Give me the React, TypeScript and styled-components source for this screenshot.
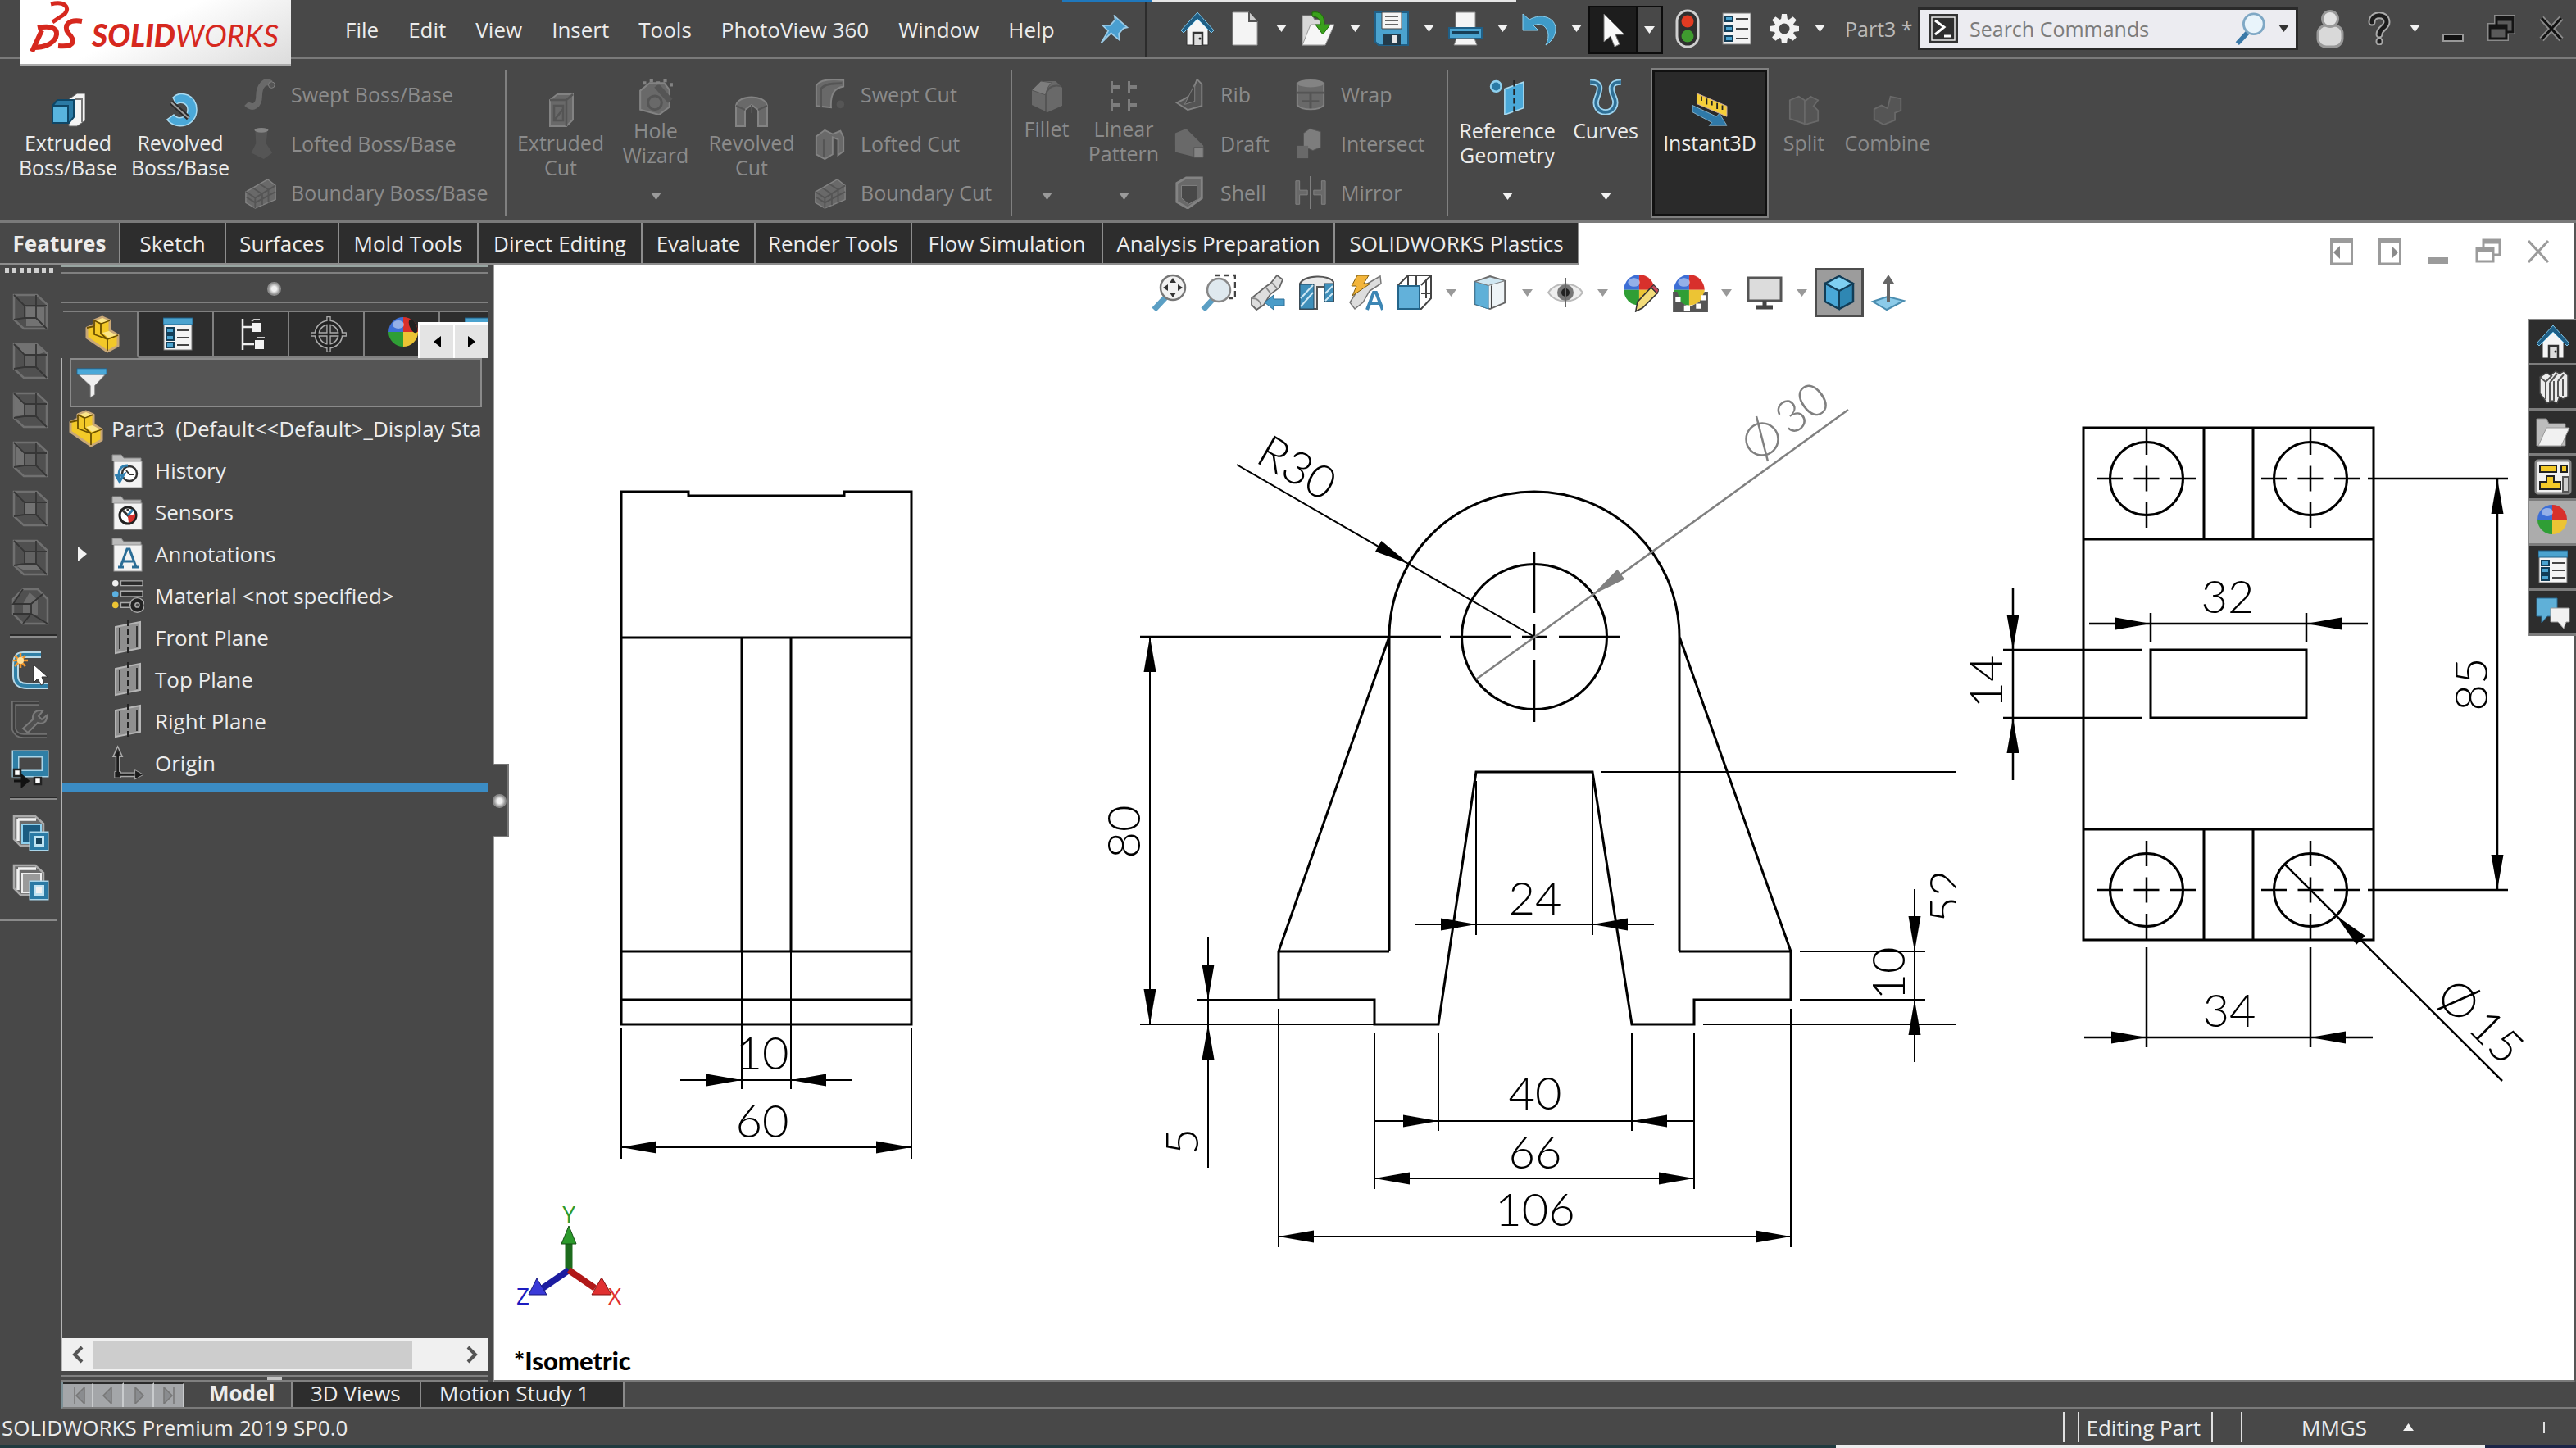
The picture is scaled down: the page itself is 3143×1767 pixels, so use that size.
import React from "react";
import styled, { createGlobalStyle } from "styled-components";

const bg = "#484848";
const dark = "#2d2d2d";
const rule = "#808080";
const blue = "#4ba3cf";
const deep = "#1f5f86";

const Global = createGlobalStyle`
  *, *::before, *::after { box-sizing: border-box; }
  body { margin: 0; background: ${bg}; }
  button, input { font: inherit; color: inherit; border: 0; margin: 0; padding: 0; background: none; outline: 0; }
  ul { margin: 0; padding: 0; list-style: none; }
  svg { display: block; flex: none; }
`;

const Page = styled.div`
  min-height: 100vh;
  display: flex;
  flex-direction: column;
  background: ${bg};
  color: #ececec;
  font-family: "Open Sans", "Noto Sans", sans-serif;
  font-size: 26px;
  line-height: 30px;
  overflow: hidden;
`;

/* ---------- title bar ---------- */
const TitleBar = styled.header`
  position: relative;
  display: flex;
  align-items: stretch;
  height: 72px;
  border-bottom: 3px solid #7a7a7a;
  flex: none;
`;
const Brand = styled.div`
  position: absolute;
  z-index: 2;
  left: 24px;
  top: 0;
  width: 331px;
  height: 80px;
  background: linear-gradient(155deg, #fff 45%, #dcdcdc);
  border-bottom: 2px solid #aaa;
`;
const TopStrip = styled.div`
  position: absolute;
  top: 0;
  left: 1296px;
  width: 554px;
  height: 3px;
  background: linear-gradient(90deg, #1f78bd 109px, #e6e6e6 109px);
`;
const MenuArea = styled.div`
  display: flex;
  align-items: center;
  width: 1400px;
  padding: 2px 20px 0 421px;
  border-right: 3px solid #2c2c2c;
`;
const Menus = styled.nav`
  display: flex;
  gap: 36px;
  flex: 1;
  white-space: nowrap;
`;
const MenuButton = styled.button``;
const QuickTools = styled.div`
  display: flex;
  align-items: center;
  padding-left: 32px;
`;
const Slot = styled.button<{ $w?: number }>`
  width: ${(p) => p.$w ?? 60}px;
  display: flex;
  align-items: center;
  justify-content: center;
  align-self: stretch;
  flex: none;
`;
const SelectSlot = styled(Slot)`
  margin: 7px 0 3px;
  background: #1d1d1d;
  border: 2px solid #0c0c0c;
`;
const SelectMore = styled(SelectSlot)`
  background: ${bg};
  border-left: 0;
`;
const DocName = styled.span`
  padding-left: 16px;
  color: #b9b9b9;
  font-size: 25px;
  white-space: nowrap;
`;
const TitleRight = styled.div`
  display: flex;
  align-items: center;
  margin-left: auto;
  padding-right: 3px;
`;
const SearchBox = styled.label`
  width: 464px;
  height: 52px;
  display: flex;
  align-items: center;
  background: #ececf1;
  border: 3px solid #2a2a2a;
  padding: 0 8px 0 10px;
  gap: 14px;
  font-size: 25px;
  input { flex: 1; min-width: 0; color: #333; }
  input::placeholder { color: #7c7c7c; opacity: 1; }
`;

/* ---------- ribbon ---------- */
const Ribbon = styled.section`
  display: flex;
  height: 200px;
  padding: 13px 0 5px 15px;
  border-bottom: 3px solid #7a7a7a;
  font-size: 25px;
  flex: none;
`;
const Big = styled.button<{ $w: number; $off?: boolean; $menu?: boolean; $on?: boolean }>`
  width: ${(p) => p.$w}px;
  display: flex;
  flex-direction: column;
  align-items: center;
  gap: 4px;
  padding: ${(p) => (p.$menu ? "11px 0 20px" : "28px 0 20px")};
  color: ${(p) => (p.$off ? "#8b8b8b" : "#ececec")};
  white-space: pre-line;
  ${(p) => p.$on && "background:#2a2a2a;box-shadow:inset 0 0 0 3px #111, 0 0 0 2px #808080;margin:0 3px 0 9px;"}
  flex: none;
  > :nth-child(3) { margin-top: auto; }
`;
const List = styled.div<{ $w: number }>`
  width: ${(p) => p.$w}px;
  display: grid;
  grid-template-rows: repeat(3, 60px);
  margin-left: 9px;
  flex: none;
`;
const Small = styled.button`
  display: flex;
  align-items: center;
  gap: 17px;
  color: #8b8b8b;
  white-space: nowrap;
`;
const VRule = styled.div`
  width: 2px;
  background: ${rule};
  flex: none;
`;

/* ---------- command tabs ---------- */
const TabRow = styled.div`
  display: flex;
  height: 51px;
  background: linear-gradient(90deg, ${bg} 600px, #fff 600px);
  border-right: 3px solid #555;
  flex: none;
`;
const Tab = styled.button<{ $w: number; $on?: boolean }>`
  width: ${(p) => p.$w}px;
  background: ${(p) => (p.$on ? bg : dark)};
  font-weight: ${(p) => (p.$on ? 700 : 400)};
  border-right: 2px solid #8d8d8d;
  border-bottom: 2px solid #8d8d8d;
  white-space: nowrap;
`;
const DocControls = styled.div`
  display: flex;
  gap: 29px;
  margin-left: auto;
  padding: 18px 28px 0 0;
  align-self: flex-start;
`;

/* ---------- main area ---------- */
const Main = styled.main`
  flex: 1;
  display: grid;
  grid-template-columns: 74px 529px minmax(0, 1fr);
  grid-template-rows: minmax(0, 1fr) 33px;
`;
const SideBar = styled.aside`
  grid-row: 1 / 3;
  padding: 4px 5px 0 0;
`;
const Grip = styled.div`
  height: 6px;
  margin: 0 0 17px 6px;
  background: repeating-linear-gradient(90deg, #d0d0d0 0 5px, transparent 5px 9px);
`;
const SideButton = styled.button`
  width: 100%;
  height: 60px;
  padding-left: 5px;
  display: flex;
  justify-content: center;
  align-items: center;
`;
const SideRule = styled.hr`
  margin: 4px 0 10px 12px;
  border: 0;
  height: 4px;
  border-top: 2px solid #2a2a2a;
  border-bottom: 2px solid #8a8a8a;
`;
const SideEnd = styled.hr`
  margin: 16px 0 0;
  border: 0;
  border-top: 2px solid #8a8a8a;
`;

const Panel = styled.section`
  display: flex;
  flex-direction: column;
  padding-right: 6px;
  border-right: 2px solid #9a9a9a;
  min-width: 0;
`;
const PanelHead = styled.div`
  height: 56px;
  display: flex;
  align-items: center;
  justify-content: center;
  border-top: 3px solid #98a5a1;
  flex: none;
  background: linear-gradient(${rule}, ${rule}) 0 6px / 100% 2px no-repeat, linear-gradient(${rule}, ${rule}) 0 42px / 100% 2px no-repeat;
`;
const Knob = styled.span`
  width: 17px;
  height: 17px;
  border-radius: 50%;
  background: radial-gradient(#f0f0f0 25%, #8c8c8c 60%);
`;
const PanelTabs = styled.div`
  display: flex;
  height: 58px;
  margin-left: 3px;
  border-top: 2px solid ${rule};
  overflow: hidden;
  position: relative;
  flex: none;
`;
const PanelTab = styled.button<{ $on?: boolean }>`
  width: 92px;
  padding-left: 6px;
  flex: none;
  display: flex;
  align-items: center;
  justify-content: center;
  background: ${(p) => (p.$on ? bg : dark)};
  border-right: 2px solid ${rule};
  border-bottom: 2px solid ${(p) => (p.$on ? bg : rule)};
`;
const TabPager = styled.div`
  position: absolute;
  right: 0;
  bottom: 0;
  display: flex;
  gap: 2px;
  padding: 3px 0 0 3px;
  background: #fff;
`;
const PagerButton = styled.button`
  width: 40px;
  height: 41px;
  background: #e4e4e4;
  display: flex;
  align-items: center;
  justify-content: center;
`;
const PanelBody = styled.div`
  flex: 1;
  display: flex;
  flex-direction: column;
  border-left: 2px solid #b4b4b4;
  min-width: 0;
`;
const Filter = styled.label`
  display: flex;
  align-items: center;
  height: 60px;
  margin: 0 7px 0 9px;
  padding-left: 6px;
  gap: 8px;
  border: 2px solid #8a8a8a;
  background: #555;
  input { flex: 1; min-width: 0; }
`;
const Tree = styled.ul``;
const Node = styled.li<{ $root?: boolean }>`
  display: flex;
  align-items: center;
  gap: ${(p) => (p.$root ? 9 : 13)}px;
  height: 51px;
  padding-left: ${(p) => (p.$root ? 7 : 19)}px;
  white-space: pre;
`;
const Twisty = styled.button`
  width: 30px;
  flex: none;
  margin-right: -2px;
`;
const Rollback = styled.div`
  height: 10px;
  background: #3b8cc4;
`;
const HScroll = styled.div`
  margin-top: auto;
  height: 40px;
  display: grid;
  grid-template-columns: 38px 1fr 38px;
  background: #f0f0f0;
`;
const ScrollTrack = styled.div`
  padding: 3px 54px 3px 0;
  &::before { content: ""; display: block; height: 100%; background: #cdcdcd; }
`;
const ScrollEnd = styled.button`
  display: flex;
  align-items: center;
  justify-content: center;
`;
const PanelFoot = styled.div`
  height: 14px;
  display: flex;
  justify-content: center;
  align-items: flex-end;
  border-bottom: 3px solid ${rule};
  background: linear-gradient(${rule}, ${rule}) 0 5px / 100% 2px no-repeat;
  flex: none;
  &::before { content: ""; width: 18px; height: 4px; background: #c4c4c4; }
`;

const Canvas = styled.section`
  position: relative;
  background: #fff;
  border-right: 3px solid #555;
  border-bottom: 3px solid #7a7a7a;
  min-width: 0;
  display: grid;
`;
const Sheet = styled.svg`
  width: 100%;
  height: 100%;
`;
const Hud = styled.div`
  position: absolute;
  top: 4px;
  left: 0;
  right: 14px;
  height: 60px;
  display: flex;
  justify-content: center;
`;
const HudOn = styled(Slot)`
  background: #9c9c9c;
  border: 3px solid #4d4d4d;
`;
const PanelHandle = styled.button`
  position: absolute;
  left: -2px;
  top: 609px;
  width: 20px;
  height: 90px;
  background: ${bg};
  border: 2px solid #777;
  border-left: 0;
  display: flex;
  align-items: center;
`;
const TaskPane = styled.div`
  position: absolute;
  right: -3px;
  top: 66px;
  width: 59px;
  display: grid;
  border-left: 2px solid #8a8a8a;
  border-top: 2px solid #8a8a8a;
`;
const TaskButton = styled.button<{ $on?: boolean }>`
  height: 55px;
  background: ${(p) => (p.$on ? "#acacac" : dark)};
  border-bottom: 3px solid #7c7c7c;
  display: flex;
  align-items: center;
  justify-content: center;
`;

/* ---------- bottom ---------- */
const BottomTabs = styled.div`
  grid-column: 2 / 4;
  display: flex;
  align-items: stretch;
  border-left: 3px solid #7c9096;
  border-bottom: 3px solid #7a7a7a;
`;
const Step = styled.button`
  width: 37px;
  background: #a4a6a9;
  border-right: 2px solid #c9cbcd;
  border-top: 2px solid #2a2a2a;
  display: flex;
  align-items: center;
  justify-content: center;
`;
const BottomTab = styled.button<{ $w: number; $on?: boolean }>`
  width: ${(p) => p.$w}px;
  background: ${(p) => (p.$on ? bg : dark)};
  font-weight: ${(p) => (p.$on ? 700 : 400)};
  border-right: 2px solid #8a8a8a;
  line-height: 24px;
  padding: 0 0 4px ${(p) => (p.$on ? 30 : 22)}px;
  text-align: left;
  white-space: nowrap;
`;
const Status = styled.footer`
  display: flex;
  align-items: center;
  height: 43px;
  padding-left: 2px;
  flex: none;
  white-space: nowrap;
`;
const StatusRight = styled.div`
  display: flex;
  align-items: center;
  margin-left: auto;
  padding-right: 38px;
`;
const Bar = styled.span<{ $l?: number; $r?: number; $h?: number }>`
  width: 2px;
  height: ${(p) => p.$h ?? 37}px;
  background: #e0e0e0;
  margin-left: ${(p) => p.$l ?? 0}px;
  margin-right: ${(p) => p.$r ?? 0}px;
`;
const Units = styled.button`
  display: flex;
  align-items: center;
  gap: 44px;
  padding: 0 158px 0 72px;
`;
const TaskStrip = styled.div`
  height: 4px;
  flex: none;
  background: linear-gradient(90deg, transparent calc(100% - 111px), #1c2547 calc(100% - 111px)),
    linear-gradient(90deg, #213a3f 2240px, #ececec 2240px);
`;

/* ---------- icons ---------- */
type P = { children: React.ReactNode; w?: number; h?: number; vb?: string };
const I = ({ children, w = 42, h = 42, vb = "0 0 42 42" }: P) => (
  <svg width={w} height={h} viewBox={vb} aria-hidden="true">{children}</svg>
);
const Down = ({ c = "#f2f2f2", up }: { c?: string; up?: boolean }) => (
  <I w={13} h={9} vb="0 0 13 9"><path d={up ? "M0 9h13L6.5 0z" : "M0 0h13L6.5 9z"} fill={c} /></I>
);
const HomeIcon = () => (
  <I>
    <path d="M8 21v20h26V21L21 8z" fill="#f5f5f5" stroke="#333" />
    <path d="M1 23 21 1l20 22-3 3L21 9 4 26z" fill={deep} stroke="#7fc4e6" />
    <path d="M16 41V26h11v15" fill="#ddd" stroke="#333" strokeWidth="2.5" />
    <circle cx="24" cy="33" r="1.5" fill="#222" />
  </I>
);
const NewIcon = () => (
  <I><path d="M6 1h20l10 11v29H6z" fill="#f4f4f4" stroke="#999" /><path d="M26 1v11h10" fill="#ccc" stroke="#555" strokeWidth="2" /></I>
);
const OpenIcon = () => (
  <I>
    <path d="M2 41V5h12l3 5h10v31z" fill="#d7d7d7" stroke="#888" /><path d="M2 41 12 16h29L30 41z" fill="#f6f6f6" stroke="#999" />
    <path d="M14 1c10-2 15 4 15 15h7L27 28l-9-12h6c0-7-4-10-10-10z" fill="#3aa01c" stroke="#1d6a08" />
  </I>
);
const SaveIcon = () => (
  <I>
    <path d="M1 1h40v40H5l-4-4z" fill={blue} stroke={deep} strokeWidth="2" /><path d="M9 1h24v20H9z" fill="#f5f5f5" stroke="#444" />
    <path d="M13 6h16M13 11h16M13 16h16" stroke="#666" strokeWidth="2" /><path d="M11 27h21v14H11z" fill="#233b4a" /><path d="M22 29h6v10h-6z" fill="#e8e8e8" />
  </I>
);
const PrintIcon = () => (
  <I>
    <path d="M9 1h24v20H9z" fill="#f5f5f5" stroke="#888" /><path d="M1 20h40v13H1z" fill={blue} stroke={deep} strokeWidth="2" />
    <path d="M5 24h32v4H5z" fill="#173f58" /><path d="M10 33h22l3 8H7z" fill="#f5f5f5" stroke="#888" />
  </I>
);
const UndoIcon = () => (
  <I><path d="M1 3v20h19l-6-6c10-5 18 3 18 12 0 5-1 8-3 12 8-5 12-12 12-20C41 8 24 1 9 10z" fill="#3f9bc8" stroke="#8ed0ee" /></I>
);
const CursorIcon = () => (
  <I><path d="M10 1v34l8-7 5 13 6-3-5-12h11z" fill="#fafafa" stroke="#777" /></I>
);
const TrafficIcon = () => (
  <I w={30} h={48} vb="0 0 30 48">
    <rect x="2" y="2" width="26" height="44" rx="13" fill="#2f2f2f" stroke="#cfcfcf" strokeWidth="3" />
    <circle cx="15" cy="15" r="7.5" fill="#e23b22" /><circle cx="15" cy="33" r="7.5" fill="#3f9b2f" />
  </I>
);
const ListIcon = ({ head }: { head?: boolean }) => (
  <I w={36} h={head ? 42 : 40} vb="0 0 36 40">
    <rect x="1" y="1" width="34" height="38" fill="#f3f3f3" stroke="#777" />
    {head && <rect x="0" y="0" width="36" height="8" fill={blue} stroke={deep} />}
    {(head ? [15, 24, 33] : [8, 20, 32]).map((y) => (
      <g key={y}><rect x="4" y={y - 3} width="9" height="6" fill={blue} stroke="#123d57" strokeWidth="2" /><path d={`M17 ${y}h15`} stroke="#444" strokeWidth="2" /></g>
    ))}
  </I>
);
const GearIcon = () => (
  <I>
    <g fill="#f2f2f2" transform="translate(21 21)">
      {[0, 45, 90, 135, 180, 225, 270, 315].map((a) => <path key={a} d="M-4-11-3-18H3L4-11z" transform={`rotate(${a})`} />)}
    </g>
    <circle cx="21" cy="21" r="9.5" fill="none" stroke="#f2f2f2" strokeWidth="6" />
  </I>
);
const PinIcon = () => (
  <I w={36} h={36}><path d="M22 2 40 18l-5 1-7 8 1 9-5-4-7-6L3 40l10-17-8-8 11 0 7-8z" fill="#4a9fd0" stroke="#9ccbe6" strokeWidth="2" /></I>
);
const PromptIcon = () => (
  <I w={36} h={36} vb="0 0 36 36"><rect x="1.5" y="1.5" width="33" height="33" fill="#2f2f2f" stroke="#333" strokeWidth="3" /><rect x="4" y="4" width="28" height="28" fill="none" stroke="#eee" strokeWidth="1.5" /><path d="M8 8l11 8-11 9M19 27h9" fill="none" stroke="#fff" strokeWidth="3" /></I>
);
const Lens = () => (
  <I w={40} h={42}><path d="M17 26 4 40" stroke="#3b79a8" strokeWidth="6" /><circle cx="25" cy="15" r="13" fill="#e9f4fb" stroke="#7fa8c5" strokeWidth="3" /></I>
);
const UserIcon = () => (
  <I w={34} h={48} vb="0 0 34 48"><rect x="2" y="20" width="30" height="26" rx="10" fill="#d9d9d9" stroke="#999" strokeWidth="3" /><circle cx="17" cy="12" r="9.5" fill="#e2e2e2" stroke="#999" strokeWidth="3" /></I>
);
const HelpIcon = () => (
  <I w={28} h={40} vb="0 0 28 40"><g fill="none" strokeLinecap="round"><path d="M5 12c0-11 18-11 18 0 0 7-9 7-9 15M14 35v1" stroke="#aaa" strokeWidth="9" /><path d="M5 12c0-11 18-11 18 0 0 7-9 7-9 15M14 35v1" stroke="#1c1c1c" strokeWidth="5" /></g></I>
);
const MinIcon = ({ c, o }: { c: string; o?: string }) => <I w={28} h={34} vb="0 0 28 34"><rect x="2" y="24" width="24" height="8" fill={c} stroke={o} strokeWidth="2" /></I>;
const RestoreIcon = ({ c, f, o }: { c: string; f: string; o?: string }) => (
  <I w={34} h={34} vb="0 0 34 34">
    {o && <path d="M11 3h20v18H11zM3 13h20v16H3z" fill="none" stroke={o} strokeWidth="6" />}
    <path d="M11 3h20v18H11z" fill={f} stroke={c} strokeWidth="3" /><path d="M11 5h20" stroke={c} strokeWidth="5" /><path d="M3 13h20v16H3z" fill={f} stroke={c} strokeWidth="3" /><path d="M3 15h20" stroke={c} strokeWidth="5" />
  </I>
);
const XIcon = ({ c, o }: { c: string; o?: string }) => (
  <I w={30} h={34} vb="0 0 30 34"><path d="M3 4l24 26M27 4 3 30" stroke={o} strokeWidth="7" /><path d="M3 4l24 26M27 4 3 30" stroke={c} strokeWidth="3" /></I>
);
const PaneIcon = ({ right }: { right?: boolean }) => (
  <I w={28} h={34} vb="0 0 28 34"><rect x="1.5" y="2" width="25" height="30" fill="none" stroke="#9b9b9b" strokeWidth="3" /><path d="M1 4h26" stroke="#9b9b9b" strokeWidth="4" /><path d={right ? "M16 10v16l8-8z" : "M12 10v16l-8-8z"} fill="#8a8a8a" /></I>
);

const grey = { f: "#7d7d7d", m: "#696969", d: "#555", s: "#838383" };
const Ex = () => (
  <I><path d="M22 8 32 1h10v33l-10 7H22z" fill="#f4f4f4" stroke="#666" /><path d="M30 8h8v28" fill="none" stroke="#777" strokeWidth="2" /><path d="M2 16 8 9h20v21l-6 7H2z" fill="#2a7aa5" stroke="#0e4666" strokeWidth="2" /><path d="M2 16h19v21H2z" fill="#58b4de" stroke="#0e4666" strokeWidth="2" /></I>
);
const Rev = () => (
  <I><path d="M12 6C22-4 41 3 41 21c0 19-24 27-36 12l8-6c6 7 17 3 17-6 0-8-8-11-14-7z" fill="#4aa8d8" stroke="#a9daf0" strokeWidth="1.5" /><path d="M10 12 31 31" stroke="#2b2b2b" strokeWidth="6" /><path d="M10 12 31 31" stroke="#9b9b9b" strokeWidth="2" /></I>
);
const Sweep = () => <I w={40} h={40}><path d="M3 33c8 8 16 2 16-10S26 2 34 7" fill="none" stroke={grey.m} strokeWidth="8" /><circle cx="35" cy="9" r="4" fill={grey.d} stroke={grey.s} /></I>;
const Loft = () => <I w={40} h={40}><path d="M14 3h16l-2 18 8 12-11 8L9 33l6-12z" fill={grey.d} /><ellipse cx="22" cy="4" rx="9" ry="3" fill={grey.s} /></I>;
const Bound = () => <I w={40} h={40}><path d="M2 20 30 4l10 8v18L14 41 2 34z" fill={grey.m} stroke={grey.s} strokeWidth="1.5" /><path d="M2 20l12 8 26-16M14 28v13M11 15l12 8v14M20 10l11 7v17M3 27l11 7 26-14" fill="none" stroke={grey.d} strokeWidth="2" /></I>;
const CutBox = () => <I><path d="M8 9 17 2h19v31l-8 8H8z" fill={grey.m} stroke={grey.s} strokeWidth="2" /><path d="M8 9h20v32M28 9l8-7M13 16h11v18H13zM13 34 24 20" fill="none" stroke={grey.d} strokeWidth="2.5" /></I>;
const Hole = () => <I w={44} h={44}><path d="M3 14 14 5h17l6 8v20l-12 9-22-6z" fill={grey.m} stroke={grey.s} strokeWidth="2" /><circle cx="20" cy="28" r="8" fill="none" stroke={grey.d} strokeWidth="3" /><path d="M22 8l16 18" stroke={grey.d} strokeWidth="7" /><path d="M6 5h4m4-3h4m4 3h4m4-3h4m4 5h3" stroke={grey.s} strokeWidth="4" /></I>;
const Arch = () => <I><path d="M2 41V16C4 2 38 2 40 16v25H29V21l-8-6-8 6v20z" fill={grey.m} stroke={grey.s} strokeWidth="2" /><path d="M2 16l11 5M40 16l-11 5M21 15v10" stroke={grey.d} strokeWidth="2" /></I>;
const SwCut = () => <I w={40} h={40}><path d="M3 36V10C8 2 20 1 38 3v8c-12 2-17 10-16 27z" fill={grey.m} stroke={grey.s} strokeWidth="2" /><path d="M9 38V14C14 8 22 7 36 7" fill="none" stroke={grey.d} strokeWidth="3" /><circle cx="34" cy="34" r="5" fill={grey.d} /></I>;
const LoCut = () => <I w={40} h={40}><path d="M3 12 14 4l10 5 10-4 4 8v18l-7 5V16l-7-3v22l-10 6-11-6z" fill={grey.m} stroke={grey.s} strokeWidth="2" /><path d="M13 16v22" stroke={grey.d} strokeWidth="3" /></I>;
const Fil = () => <I><path d="M3 14 14 3h18l8 8v22L22 41 3 32z" fill={grey.m} /><path d="M3 14l11-11 14 2c-4 2-7 7-8 15z" fill={grey.f} stroke={grey.d} /><path d="M20 20v20M20 20c2-9 8-13 18-11" fill="none" stroke={grey.d} strokeWidth="2" /></I>;
const Lin = () => <I><g fill={grey.f}><path d="M5 3h3v5h8v5H8v5H5zM26 3h3v5h8v5h-8v5h-3zM5 25h3v5h8v5H8v5H5zM26 25h3v5h8v5h-8v5h-3z" /></g></I>;
const RibI = () => <I w={40} h={40}><path d="M30 2 36 8v28l-18 5L4 32l8-4 10-6z" fill={grey.d} stroke={grey.s} strokeWidth="2" /><path d="M27 8v22l-13 4z" fill={bg} stroke={grey.s} /></I>;
const DraftI = () => <I w={40} h={40}><path d="M2 8 16 2l22 22v14H26L2 32z" fill={grey.m} /><path d="M26 26h12v13H26z" fill={grey.s} stroke={grey.d} /></I>;
const ShellI = () => <I w={40} h={40}><path d="M4 9 16 2h20v26L18 41 4 33z" fill={grey.m} stroke={grey.s} strokeWidth="3" /><path d="M10 12h20v18l-11 6-9-8z" fill={bg} stroke={grey.s} /></I>;
const WrapI = () => <I w={40} h={40}><path d="M4 7v28c6 7 28 7 34 0V7z" fill={grey.m} stroke={grey.s} strokeWidth="2" /><ellipse cx="21" cy="7" rx="17" ry="5" fill={grey.s} /><path d="M4 19h34M21 19v20M10 30h22" stroke={grey.d} strokeWidth="3" /></I>;
const InterI = () => <I w={40} h={40}><path d="M12 8 20 2l14 4v20l-10 4-12-5z" fill={grey.f} stroke={grey.d} /><path d="M4 24h14v16H4z" fill={grey.m} /></I>;
const MirI = () => <I w={40} h={40}><path d="M21 0v42" stroke={grey.s} strokeWidth="2" /><path d="M2 6h5v12h10v6H7v12H2zM40 6h-5v12H25v6h10v12h5z" fill={grey.m} stroke={grey.s} /></I>;
const RefI = () => <I w={46} h={44}><path d="M18 12 40 4v30l-22 8z" fill="#4aa8d8" stroke="#a9daf0" strokeWidth="1.5" /><path d="M29 2v40" stroke="#222" strokeWidth="2" strokeDasharray="7 3" /><circle cx="8" cy="9" r="6" fill="#2a7aa5" stroke="#8ed0ee" strokeWidth="2.5" /></I>;
const CurveI = () => <I w={46} h={44}><g fill="none"><path d="M3 4c14 0 12 8 8 18s2 17 10 17 14-8 10-17-6-18 8-18" stroke="#9dd3ee" strokeWidth="7" /><path d="M3 4c14 0 12 8 8 18s2 17 10 17 14-8 10-17-6-18 8-18" stroke="#2f6f95" strokeWidth="3.5" /></g></I>;
const InstI = () => <I w={48} h={42} vb="0 0 50 46"><path d="M8 1 48 18v14L8 15z" fill="#f6cf3a" stroke="#caa" /><path d="M14 5v6M21 8v8M28 11v6M35 14v8M42 17v6" stroke="#222" strokeWidth="2" /><path d="M2 17 34 32l4-4 10 16H24l4-4L2 26z" fill="#2f79a8" stroke="#8ab6cf" /></I>;
const SplitI = () => <I w={38} h={42}><path d="M2 8 14 3l8 5v32L2 33zM22 10l8-7 10 5-6 8 6 6v14l-18 5z" fill={grey.d} stroke={grey.m} strokeWidth="2" /></I>;
const CombI = () => <I w={38} h={42}><path d="M3 20l10-5 8 4 4-16 14 3v16l-8 3v10L16 41 3 34z" fill={grey.d} stroke={grey.m} strokeWidth="2" /></I>;

const PartIcon = () => (
  <I w={44} h={46} vb="0 0 44 46">
    <path d="M12 6 22 2l9 4v12l10 6v13L28 44 3 27V15l9-4z" fill="#f3c928" stroke="#c9a877" strokeWidth="3" strokeLinejoin="round" />
    <path d="M12 6l8 4 11-4M20 10v12L28 29l13-5M28 29v14M3 15l9-2v10l16 6M12 13V6" fill="none" stroke="#6b5000" strokeWidth="1.8" />
    <path d="M14 6l8-3 7 3-8 3zM22 21l8-2 9 5-10 3z" fill="#fbe68a" />
  </I>
);
const BranchIcon = () => <I><path d="M8 2v38M8 12h12M8 33h14" stroke="#eee" strokeWidth="2.5" fill="none" /><path d="M20 7h10v11H20zM23 28h11v11H23z" fill="#f3f3f3" /><path d="M19 5l3-2h7M26 25h9" stroke="#ccc" strokeWidth="2" /></I>;
const TargetIcon = () => <I w={46} h={46}><g fill="none"><circle cx="21" cy="21" r="13" stroke="#aaa" strokeWidth="6" /><path d="M21 1v40M1 21h40" stroke="#aaa" strokeWidth="5" /><circle cx="21" cy="21" r="13" stroke="#222" strokeWidth="3" /><path d="M21 2v38M2 21h38" stroke="#222" strokeWidth="2.5" /></g></I>;
const Ball = ({ extra, w = 42, h = 46 }: { extra?: React.ReactNode; w?: number; h?: number }) => (
  <I w={w} h={h} vb="0 0 42 46">
    <path d="M20 20V2A18 18 0 0 0 2 20z" fill="#3d6fd6" /><path d="M20 20V2a18 18 0 0 1 18 18z" fill="#d8302c" />
    <path d="M20 20v18A18 18 0 0 1 2 20z" fill="#2f9e35" /><path d="M20 20v18a18 18 0 0 0 18-18z" fill="#ecc434" />
    <ellipse cx="14" cy="11" rx="7" ry="5" fill="#fff" opacity=".45" />{extra}
  </I>
);
const Funnel = () => <I w={38} h={42}><path d="M2 9h38L25 25v12l-6 4V25z" fill="#eee" stroke="#888" /><path d="M1 2h40v8H1z" fill="#4aa8d8" stroke={deep} /></I>;
const Folder = ({ children }: { children: React.ReactNode }) => (
  <I w={40} h={44} vb="0 0 40 44"><path d="M1 11V3h11l3 4h21v4" fill="#bbb" stroke="#888" /><rect x="3" y="11" width="34" height="32" fill="#f3f3f3" stroke="#999" /><g transform="translate(0 4)">{children}</g></I>
);
const PlaneIcon = () => <I w={40} h={46} vb="0 0 40 44"><path d="M5 9 35 3v32L5 41z" fill="#8f8f8f" stroke="#b5b5b5" strokeWidth="2" /><path d="M10 10v26M31 8v26" stroke="#333" strokeWidth="2" /><path d="M20 1v42" stroke="#222" strokeWidth="2" strokeDasharray="7 4" /></I>;
const MatIcon = () => (
  <I w={40} h={46} vb="0 0 42 44"><path d="M12 3h28v6H12zM12 16h28v7H12zM12 31h18v6H12z" fill="#2b2b2b" stroke="#aaa" strokeWidth="1.5" /><circle cx="5" cy="6" r="4" fill="#eee" /><circle cx="5" cy="20" r="4" fill="#5bb0e0" /><circle cx="5" cy="34" r="4" fill="#ecc434" /><circle cx="33" cy="34" r="6" fill="none" stroke="#aaa" strokeWidth="8" /><circle cx="33" cy="34" r="6" fill="none" stroke="#222" strokeWidth="5" /></I>
);
const OriginIcon = () => <I w={40} h={46} vb="0 0 42 44"><path d="M8 5v32h28" fill="none" stroke="#aaa" strokeWidth="6" /><path d="M2 14 8 1l6 13z" fill="#333" stroke="#aaa" strokeWidth="1.5" /><path d="M30 31l11 6-11 6zM4 33h8v8H4z" fill="#1c1c1c" stroke="#aaa" /><path d="M8 8v28M10 37h20" stroke="#1c1c1c" strokeWidth="3" /></I>;

const faces = [
  "M18 18h22v23H18z", "M6 3h24l10 10-9 3H16z", "M4 4l12 12v14L4 31z", "M6 4l10 12v14L6 33z", "M16 16h14v16H16z", "M6 34l10-4h14l9 9H16z",
];
const ViewCube = ({ n }: { n: number }) => (
  <I w={46} h={46} vb="0 0 46 46">
    <path d="M3 3h28l12 11v30H15L3 33z" fill="#505050" stroke="#707070" strokeWidth="2.5" />
    <path d="M17 17h12v13H17z" fill="#626262" />
    <path d={faces[n]} fill="#727272" /><path d="M3 3l13 13v15L3 33M16 16h14v15H16M30 16l0-13M30 16h13M30 31l13 13" fill="none" stroke="#363636" strokeWidth="1.8" />
  </I>
);
const IsoCube = () => <I w={46} h={46} vb="0 0 46 46"><path d="M14 2h18l12 12v30H14L2 32V14z" fill="#505050" stroke="#707070" strokeWidth="2.5" /><path d="M22 6 32 15v19H14V20z" fill="#6c6c6c" /><path d="M14 2 2 20h22L38 8M24 20v12L14 44M24 32l20 12M2 32h22" fill="none" stroke="#333" strokeWidth="1.8" /></I>;
const SketchNew = () => (
  <I w={46} h={46} vb="0 0 46 46"><path d="M36 4H14C6 4 5 10 5 18v12c0 9 6 12 14 12h26" fill="none" stroke="#b9d8e6" strokeWidth="8" /><path d="M36 4H14C6 4 5 10 5 18v12c0 9 6 12 14 12h26" fill="none" stroke="#2f7fa6" strokeWidth="4" />
    <path d="M11 2v18M2 11h18M4 5l13 13M17 5 4 18" stroke="#f0962c" strokeWidth="2.5" /><circle cx="11" cy="11" r="4" fill="#ffe09a" /><path d="M27 16v22l5-5 4 8 4-2-3-8h7z" fill="#fff" stroke="#333" /></I>
);
const SketchFix = () => <I w={46} h={46} vb="0 0 46 46"><path d="M34 3H3v32c2 6 6 8 12 8h28" fill="none" stroke="#707070" strokeWidth="6" /><path d="M34 3H3v32c2 6 6 8 12 8h28" fill="none" stroke="#3e3e3e" strokeWidth="2.5" /><path d="M14 34l12-11c-1-8 5-13 12-10l-5 6 4 4 6-5c1 8-5 11-11 9L20 39z" fill="#505050" stroke="#7a7a7a" strokeWidth="2" /></I>;
const RectMove = () => <I w={46} h={46} vb="0 0 46 46"><rect x="5" y="5" width="36" height="24" fill="none" stroke="#a8d4e8" strokeWidth="9" /><rect x="5" y="5" width="36" height="24" fill="none" stroke="#2f7fa6" strokeWidth="6" /><path d="M3 24h8v8H3zM28 34h8v8h-8z" fill="#fff" stroke="#222" strokeWidth="2.5" /><path d="M3 38h14M13 32l7 6-7 6z" fill="#111" stroke="#111" strokeWidth="3" /></I>;
const Layers = ({ solid }: { solid?: boolean }) => (
  <I w={46} h={46} vb="0 0 46 46"><path d="M3 3h26l10 9v27H11L3 31z" fill="#6b6b6b" stroke="#aaa" strokeWidth="2.5" /><path d="M8 7h22M8 7v26" stroke="#f1f1f1" strokeWidth="3.5" fill="none" /><rect x="13" y="13" width="23" height="23" fill={solid ? "#1b5b80" : "#9a9a9a"} stroke={solid ? "#8ed0ee" : "#eee"} strokeWidth="2" />
    <rect x="24" y="24" width="19" height="19" fill="#bfe3f2" stroke="#a8d4e8" strokeWidth="5" /><rect x="25" y="25" width="17" height="17" fill="none" stroke="#2a7aa5" strokeWidth="4" /><rect x="30" y="30" width="7" height="7" fill={solid ? "#17435c" : "#f1f1f1"} /></I>
);

/* heads-up icons */
const ZFit = () => <I w={44} h={46} vb="0 0 44 46"><path d="M18 29 4 44" stroke="#5b9fc4" strokeWidth="7" /><circle cx="27" cy="17" r="15" fill="#f2f2f2" stroke="#777" strokeWidth="2.5" /><path d="M27 5l-4 6h8zM27 29l-4-6h8zM15 17l6-4v8zM39 17l-6-4v8z" fill="#333" /></I>;
const ZArea = () => <I w={44} h={46} vb="0 0 44 46"><path d="M18 2h25v28h-8" fill="none" stroke="#444" strokeWidth="2.5" strokeDasharray="7 4" /><path d="M16 31 4 44" stroke="#5b9fc4" strokeWidth="7" /><circle cx="23" cy="20" r="14" fill="#dfe9ef" stroke="#888" strokeWidth="2.5" /></I>;
const ZPrev = () => <I w={44} h={46} vb="0 0 44 46"><path d="M34 2 26 12 20 16 3 30v8l6 6 9-6 8-13 11-8 4-10z" fill="#dedede" stroke="#666" strokeWidth="1.8" /><path d="M20 16l7 9M28 11l7 8M4 30c6 0 10 4 11 10" fill="none" stroke="#888" strokeWidth="1.8" /><path d="M19 35l11-9v5h13v8H30v5z" fill="#4a9cc8" stroke="#2d6f97" /></I>;
const Section = () => <I w={44} h={46} vb="0 0 44 46"><path d="M2 12C8 1 38 1 43 10v24H32V16h-9v27H2z" fill="#e9e9e9" stroke="#555" strokeWidth="2" /><path d="M2 13h17v30H2zM32 12h11v22H32z" fill="#3f8fba" stroke="#24455a" /><path d="M3 30 18 14M3 40 18 23M33 24l9-9M33 33l9-9" stroke="#cfe8f5" strokeWidth="2" /></I>;
const Dyn = () => <I w={44} h={46} vb="0 0 44 46"><path d="M40 3 14 18 3 35l6 8 10-8 8-14 14-9z" fill="#ddd" stroke="#777" strokeWidth="1.5" /><path d="M12 2h14l-6 10h8L6 27l5-12H5z" fill="#f3b53b" stroke="#7b5a10" /><path d="M24 44l8-21h3l8 21M28 36h11" fill="none" stroke="#3c86b4" strokeWidth="4" /></I>;
const Orient = () => <I w={44} h={46} vb="0 0 44 46"><path d="M2 14 14 2h28v28L30 43H2z" fill="#fff" stroke="#444" strokeWidth="2" /><path d="M14 2v12M42 2 30 14M24 2v22M30 24h12M36 8v22" stroke="#444" strokeWidth="2" /><path d="M2 15h26v28H2z" fill="#62b1da" stroke="#24658a" strokeWidth="2" /></I>;
const Disp = () => <I w={42} h={46} vb="0 0 44 46"><path d="M3 9 22 2l19 6v28l-19 8-19-6z" fill="#eef4f7" stroke="#666" strokeWidth="2" /><path d="M3 9l17 5v30L3 38z" fill="#5fb0d8" stroke="#3a7fa5" /><path d="M20 14l21-6-19-5-19 6z" fill="#cfe6f1" stroke="#777" /><path d="M24 14v29" stroke="#444" strokeWidth="2" /></I>;
const Eye = () => <I w={44} h={40} vb="0 0 44 40"><path d="M1 20C10 6 34 6 43 20 34 34 10 34 1 20z" fill="#eee" stroke="#bbb" strokeWidth="2" /><circle cx="22" cy="20" r="10" fill="#777" /><circle cx="22" cy="20" r="5" fill="#222" /><path d="M22 2v36" stroke="#666" strokeWidth="2" /></I>;
const Pencil = <g><path d="M16 45 18 34 34 17l7 7-17 17z" fill="#f3dc7a" stroke="#333" strokeWidth="1.5" /><path d="M34 17l3-3 6 6-2 4z" fill="#c24a5a" stroke="#333" /></g>;
const Checker = <g><path d="M1 22h5l4 12 10 6 12-6 6-12h4v24H1z" fill="#555" /><path d="M4 28h6v6H4zM14 38h7v6h-7zM28 36h6v6h-6zM34 26h6v6h-6z" fill="#fff" /></g>;
const Monitor = () => <I w={44} h={42} vb="0 0 44 42"><rect x="2" y="3" width="40" height="28" fill="#dcdcdc" stroke="#555" strokeWidth="3" /><path d="M22 31v6M12 39h20" stroke="#444" strokeWidth="5" /></I>;
const BlueCube = () => <I w={42} h={44} vb="0 0 42 44"><path d="M21 2 38 11v22L21 42 4 33V11z" fill="#2f87b3" stroke="#123d57" strokeWidth="2.5" /><path d="M21 2 38 11 21 20 4 11z" fill="#7fd0f2" stroke="#123d57" strokeWidth="2" /><path d="M4 11l17 9v22L4 33z" fill="#4aa8d8" stroke="#123d57" strokeWidth="2" /></I>;
const NormalTo = () => <I w={44} h={46} vb="0 0 44 46"><path d="M3 34l18-6 20 5-21 11z" fill="#8ccbe9" stroke="#4a8db0" strokeWidth="2" /><path d="M22 34V8" stroke="#666" strokeWidth="4" /><path d="M15 12 22 1l7 11z" fill="#666" /></I>;

/* task pane icons */
const Books = () => (
  <I>
    <path d="M5 9 13 4l5 3 6-5 5 3 5-3 5 5v26l-6 3-4-3-3 8-6-3-6 3-9-12z" fill="#ececec" stroke="#444" strokeWidth="1.5" />
    <path d="M5 9l7 6 8-8M17 16l9-11M27 14l7-8M12 15v21M17 16v24M22 14v24M27 14v20M33 12v20" fill="none" stroke="#555" strokeWidth="2" />
  </I>
);
const FolderOpen = () => <I><path d="M1 38V5h12l3 6h20v27z" fill="#bdbdbd" stroke="#888" /><path d="M3 38 13 16h28L31 38z" fill="#f1f1f1" stroke="#999" /></I>;
const Palette = () => <I w={46} h={44} vb="0 0 46 44"><rect x="2" y="2" width="42" height="40" rx="3" fill="#f1f1f1" stroke="#8a8a8a" strokeWidth="3" /><path d="M7 8h20v8H7zM33 8h7v8h-7zM15 21h9v7h8v9H7v-9h8z" fill="#f3c928" stroke="#222" strokeWidth="2" /><path d="M35 22h7v18h-7z" fill="#ccc" stroke="#555" strokeWidth="2" /></I>;
const Chat = () => <I><path d="M1 4h25v22H14l-7 8v-8H1z" fill="#5fb0d8" stroke="#2d6f97" /><path d="M18 16h23v17h-4l-3 8-7-8h-9z" fill="#f1f1f1" stroke="#999" /></I>;

/* ---------- drawing ---------- */
const Arrow = ({ x, y, a, c = "#000" }: { x: number; y: number; a: number; c?: string }) => (
  <path d="M0 0-43-7.5V7.5z" fill={c} transform={`translate(${x} ${y}) rotate(${a})`} />
);
const Dim = ({ x, y, a = 0, c = "#000", anchor = "middle", children }: { x: number; y: number; a?: number; c?: string; anchor?: "middle" | "start"; children: string }) => (
  <text transform={`translate(${x} ${y}) rotate(${a})`} textAnchor={anchor} fill={c} fontFamily="Lato, sans-serif" fontWeight="300" fontSize="56">{children}</text>
);
const Hole15 = ({ x, y }: { x: number; y: number }) => (
  <g transform={`translate(${x} ${y})`}>
    <circle r="44.5" strokeWidth="3" />
    <path strokeWidth="2.5" d="M-60 0h31M-15.5 0h31M29 0h31M0-60v31M0-15.5v31M0 29v31" />
  </g>
);
const Drawing = () => (
  <Sheet role="img" aria-label="Bearing bracket drawing">
    <defs><clipPath id="mid"><rect x="1300" y="323" width="1086" height="1400" /></clipPath></defs>
    <g transform="translate(-603 -323)" fill="none" stroke="#000" strokeWidth="3">
      {/* side view */}
      <path d="M758 1250V600h82v5h190v-5h82v650zM758 778h354M758 1161h354M758 1220h354M905 778v383M965 778v383" />
      <path strokeWidth="2" d="M905 1161v168M965 1161v168M758 1254v160M1112 1254v160M830 1318h210M758 1400h354" />
      {/* front view */}
      <path d="M1695 1161V777a177 177 0 0 1 354 0v384M1695 777 1560 1161V1220H1677V1250H1755L1801 942H1943L1991 1250H2067V1220H2185V1161L2049 777M1560 1161h135M2049 1161h136" />
      <circle cx="1872" cy="777" r="88.5" />
      <path strokeWidth="2.5" d="M1391 777h367M1769 777h75M1857 777h31M1902 777h74M1872 673v75M1872 762v31M1872 805v76" />
      <path strokeWidth="2" d="M1801 953v188M1943 953v188M1726 1128h292M1954 942h432M1403 777v473M1391 1250h286M1474 1144v281M1461 1220h99M1560 1231v291M2185 1231v291M1677 1260v191M2067 1260v191M1755 1260v120M1991 1260v120M1677 1368h390M1677 1438h390M1560 1509h625M2336 1085v211M2196 1161h153M2196 1220h153M2078 1250h308M1509 567 1872 777" />
      <path stroke="#808080" strokeWidth="2.5" d="M2255 500 1801 829" />
      {/* top view */}
      <path d="M2542 522h354v625h-354zM2542 658h354M2542 1012h354M2689 522v136M2749 522v136M2689 1012v135M2749 1012v135M2624 793h190v83h-190z" />
      <Hole15 x={2619} y={584} /><Hole15 x={2819} y={584} /><Hole15 x={2619} y={1086} /><Hole15 x={2819} y={1086} />
      <path strokeWidth="2.5" d="M2889 584h171M2889 1086h171M3047 584v502M2549 761h340M2624 748v35M2814 748v35M2456 717v235M2444 793h170M2444 876h170M2543 1266h352M2619 1156v122M2819 1156v122M2788 1055 3053 1319" />
      <g strokeWidth="2.5">
        <circle cx="3000" cy="1221" r="19" /><path d="M2974 1232l52-23" />
        <circle cx="2150" cy="536" r="19.5" stroke="#808080" /><path d="M2143 508l14 55" stroke="#808080" />
      </g>
    </g>
    <g transform="translate(-603 -323)">
      <Arrow x={905} y={1318} a={0} /><Arrow x={965} y={1318} a={180} /><Arrow x={758} y={1400} a={180} /><Arrow x={1112} y={1400} a={0} />
      <Arrow x={1801} y={1128} a={0} /><Arrow x={1943} y={1128} a={180} /><Arrow x={1403} y={777} a={-90} /><Arrow x={1403} y={1250} a={90} />
      <Arrow x={1474} y={1220} a={90} /><Arrow x={1474} y={1250} a={-90} /><Arrow x={1755} y={1368} a={0} /><Arrow x={1991} y={1368} a={180} />
      <Arrow x={1677} y={1438} a={180} /><Arrow x={2067} y={1438} a={0} /><Arrow x={1560} y={1509} a={180} /><Arrow x={2185} y={1509} a={0} />
      <Arrow x={2336} y={1161} a={90} /><Arrow x={2336} y={1220} a={-90} /><Arrow x={1719} y={688} a={30} /><Arrow x={1943} y={726} a={144} c="#808080" />
      <Arrow x={2624} y={761} a={0} /><Arrow x={2814} y={761} a={180} /><Arrow x={2456} y={793} a={90} /><Arrow x={2456} y={876} a={-90} />
      <Arrow x={3047} y={584} a={-90} /><Arrow x={3047} y={1086} a={90} /><Arrow x={2619} y={1266} a={0} /><Arrow x={2819} y={1266} a={180} />
      <Arrow x={2850} y={1117} a={225} />
      <Dim x={930} y={1305}>10</Dim><Dim x={930} y={1388}>60</Dim>
      <Dim x={1873} y={1116}>24</Dim><Dim x={1873} y={1354}>40</Dim><Dim x={1873} y={1426}>66</Dim><Dim x={1873} y={1496}>106</Dim>
      <Dim x={1391} y={1015} a={-90}>80</Dim><Dim x={1462} y={1393} a={-90}>5</Dim><Dim x={2324} y={1188} a={-90}>10</Dim>
      <g clipPath="url(#mid)"><Dim x={2394} y={1094} a={-90}>52</Dim></g>
      <Dim x={1530} y={563} a={30} anchor="start">R30</Dim>
      <Dim x={2184} y={533} a={-36} c="#808080" anchor="start">30</Dim>
      <Dim x={2718} y={748}>32</Dim><Dim x={2720} y={1253}>34</Dim><Dim x={2443} y={832} a={-90}>14</Dim><Dim x={3035} y={835} a={-90}>85</Dim>
      <Dim x={3009} y={1256} a={45} anchor="start">15</Dim>
      {/* triad */}
      <path d="M694 1550V1510" stroke="#1d6b1d" strokeWidth="9" /><path d="M685 1518 694 1496l9 22z" fill="#2c9a2c" stroke="#145014" />
      <path d="M694 1550 662 1572" stroke="#1c1ca0" strokeWidth="8" /><path d="M645 1580l10-20 12 20z" fill="#3a3ad8" stroke="#14147a" />
      <path d="M694 1550l32 22" stroke="#b01818" strokeWidth="8" /><path d="M746 1580l-12-21-12 21z" fill="#e03030" stroke="#801010" />
      <g fontFamily="Open Sans, sans-serif" fontSize="28" textAnchor="middle">
        <text x="694" y="1492" fill="#2c9a2c">Y</text><text x="638" y="1592" fill="#1c1cc0">Z</text><text x="750" y="1592" fill="#e03030">X</text>
      </g>
      <text x="627" y="1672" fontFamily="Lato, sans-serif" fontWeight="900" fontSize="31">*Isometric</text>
    </g>
  </Sheet>
);

const tabs: [string, number][] = [
  ["Features", 147], ["Sketch", 129], ["Surfaces", 138], ["Mold Tools", 170], ["Direct Editing", 200], ["Evaluate", 138],
  ["Render Tools", 191], ["Flow Simulation", 233], ["Analysis Preparation", 283], ["SOLIDWORKS Plastics", 298],
];
const Arr = () => <Slot $w={30} aria-label="More"><Down /></Slot>;
const HudArr = ({ w = 30 }: { w?: number }) => <Slot $w={w} aria-label="More"><Down c="#999" /></Slot>;
const chevron = (d: string) => <I w={16} h={22} vb="0 0 16 22"><path d={d} fill="none" stroke="#555" strokeWidth="4" /></I>;

export default function App() {
  return (
    <Page>
      <Global />
      <TitleBar>
        <TopStrip />
        <Brand>
          <svg width="331" height="78" viewBox="0 0 331 78" role="img" aria-label="SOLIDWORKS">
            <g fill="none" stroke="#d6281e" strokeLinejoin="round">
              <path d="M38 5c17-4 24 4 17 12L40 27" strokeWidth="5" />
              <path d="M22 34c19-4 26 2 22 12-4 8-15 12-26 12" strokeWidth="6" />
              <path d="M27 37 15 63" strokeWidth="6" />
              <path d="M76 26c-16-3-23 5-17 14 7 7 12 18-12 16" strokeWidth="6" />
            </g>
            <text x="88" y="57" fill="#d6281e" fontFamily="Lato, sans-serif" fontStyle="italic" fontSize="37">
              <tspan fontWeight="900">SOLID</tspan><tspan fontWeight="400">WORKS</tspan>
            </text>
          </svg>
        </Brand>
        <MenuArea>
          <Menus>
            {["File", "Edit", "View", "Insert", "Tools", "PhotoView 360", "Window", "Help"].map((m) => <MenuButton key={m}>{m}</MenuButton>)}
          </Menus>
          <PinIcon />
        </MenuArea>
        <QuickTools>
          <Slot $w={58} aria-label="Home"><HomeIcon /></Slot>
          <Slot $w={58} aria-label="New"><NewIcon /></Slot><Arr />
          <Slot aria-label="Open"><OpenIcon /></Slot><Arr />
          <Slot aria-label="Save"><SaveIcon /></Slot><Arr />
          <Slot aria-label="Print"><PrintIcon /></Slot><Arr />
          <Slot aria-label="Undo"><UndoIcon /></Slot><Arr />
          <SelectSlot aria-label="Select"><CursorIcon /></SelectSlot>
          <SelectMore $w={31} aria-label="Select options"><Down /></SelectMore>
          <Slot aria-label="Rebuild"><TrafficIcon /></Slot>
          <Slot aria-label="File properties"><ListIcon /></Slot>
          <Slot $w={56} aria-label="Options"><GearIcon /></Slot><Arr />
          <DocName>Part3 *</DocName>
        </QuickTools>
        <TitleRight>
          <SearchBox>
            <PromptIcon />
            <input type="text" placeholder="Search Commands" aria-label="Search Commands" />
            <Lens />
            <Down c="#333" />
          </SearchBox>
          <Slot $w={78} aria-label="Account"><UserIcon /></Slot>
          <Slot $w={42} aria-label="Help"><HelpIcon /></Slot>
          <Slot $w={44} aria-label="Help options"><Down /></Slot>
          <Slot $w={50} aria-label="Minimize"><MinIcon c="#111" o="#999" /></Slot>
          <Slot $w={68} aria-label="Restore"><RestoreIcon c="#151515" f="#5a5a5a" o="#8a8a8a" /></Slot>
          <Slot $w={54} aria-label="Close"><XIcon c="#111" o="#8a8a8a" /></Slot>
        </TitleRight>
      </TitleBar>

      <Ribbon>
        <Big $w={136}><Ex /><span>{"Extruded\nBoss/Base"}</span></Big>
        <Big $w={138}><Rev /><span>{"Revolved\nBoss/Base"}</span></Big>
        <List $w={318}>
          <Small><Sweep />Swept Boss/Base</Small><Small><Loft />Lofted Boss/Base</Small><Small><Bound />Boundary Boss/Base</Small>
        </List>
        <VRule />
        <Big $w={132} $off><CutBox /><span>{"Extruded\nCut"}</span></Big>
        <Big $w={100} $off $menu><Hole /><span>{"Hole\nWizard"}</span><Down c="#9a9a9a" /></Big>
        <Big $w={134} $off><Arch /><span>{"Revolved\nCut"}</span></Big>
        <List $w={240}>
          <Small><SwCut />Swept Cut</Small><Small><LoCut />Lofted Cut</Small><Small><Bound />Boundary Cut</Small>
        </List>
        <VRule />
        <Big $w={84} $off $menu><Fil /><span>Fillet</span><Down c="#9a9a9a" /></Big>
        <Big $w={104} $off $menu><Lin /><span>{"Linear\nPattern"}</span><Down c="#9a9a9a" /></Big>
        <List $w={138}>
          <Small><RibI />Rib</Small><Small><DraftI />Draft</Small><Small><ShellI />Shell</Small>
        </List>
        <List $w={186}>
          <Small><WrapI />Wrap</Small><Small><InterI />Intersect</Small><Small><MirI />Mirror</Small>
        </List>
        <VRule />
        <Big $w={144} $menu><RefI /><span>{"Reference\nGeometry"}</span><Down /></Big>
        <Big $w={96} $menu><CurveI /><span>Curves</span><Down /></Big>
        <Big $w={140} $on><InstI /><span>Instant3D</span></Big>
        <Big $w={84} $off><SplitI /><span>Split</span></Big>
        <Big $w={120} $off><CombI /><span>Combine</span></Big>
      </Ribbon>

      <TabRow>
        {tabs.map(([t, w], i) => <Tab key={t} $w={w} $on={i === 0}>{t}</Tab>)}
        <DocControls>
          <Slot $w={30} aria-label="Collapse left"><PaneIcon /></Slot>
          <Slot $w={30} aria-label="Collapse right"><PaneIcon right /></Slot>
          <Slot $w={30} aria-label="Minimize document"><MinIcon c="#9b9b9b" /></Slot>
          <Slot $w={34} aria-label="Restore document"><RestoreIcon c="#9b9b9b" f="#fff" /></Slot>
          <Slot $w={30} aria-label="Close document"><XIcon c="#9b9b9b" /></Slot>
        </DocControls>
      </TabRow>

      <Main>
        <SideBar>
          <Grip />
          {[0, 1, 2, 3, 4, 5].map((n) => <SideButton key={n} aria-label={`View ${n + 1}`}><ViewCube n={n} /></SideButton>)}
          <SideButton aria-label="Isometric"><IsoCube /></SideButton>
          <SideRule />
          <SideButton aria-label="Sketch"><SketchNew /></SideButton>
          <SideButton aria-label="Repair sketch"><SketchFix /></SideButton>
          <SideButton aria-label="Move entities"><RectMove /></SideButton>
          <SideRule />
          <SideButton aria-label="Copy solid"><Layers solid /></SideButton>
          <SideButton aria-label="Copy surface"><Layers /></SideButton>
          <SideEnd />
        </SideBar>

        <Panel>
          <PanelHead><Knob /></PanelHead>
          <PanelTabs>
            <PanelTab $on aria-label="Feature tree"><PartIcon /></PanelTab>
            <PanelTab aria-label="Properties"><ListIcon head /></PanelTab>
            <PanelTab aria-label="Configurations"><BranchIcon /></PanelTab>
            <PanelTab aria-label="Dimensions"><TargetIcon /></PanelTab>
            <PanelTab aria-label="Appearances"><Ball extra={<ellipse cx="32" cy="13" rx="4" ry="9" fill="#222" transform="rotate(-25 32 13)" />} /></PanelTab>
            <PanelTab aria-label="Simulation"><ListIcon head /></PanelTab>
            <TabPager>
              <PagerButton aria-label="Previous"><I w={9} h={14} vb="0 0 9 14"><path d="M9 0v14L0 7z" /></I></PagerButton>
              <PagerButton aria-label="Next"><I w={9} h={14} vb="0 0 9 14"><path d="M0 0v14l9-7z" /></I></PagerButton>
            </TabPager>
          </PanelTabs>
          <PanelBody>
            <Filter><Funnel /><input type="text" aria-label="Filter" /></Filter>
            <Tree>
              <Node $root><PartIcon />{"Part3  (Default<<Default>_Display Sta"}</Node>
              <Node><Twisty aria-label="No children" /><Folder><circle cx="22" cy="22" r="9" fill="#fff" stroke="#333" strokeWidth="2.5" /><path d="M20 12C9 12 9 20 9 26l-4-3 5 9 5-9-4 2" fill="none" stroke="#2f7fb0" strokeWidth="3" /><path d="M18 18l4 5h6" stroke="#333" strokeWidth="2" fill="none" /></Folder>History</Node>
              <Node><Twisty aria-label="No children" /><Folder><circle cx="20" cy="22" r="10" fill="#fff" stroke="#222" strokeWidth="3" /><path d="M14 16l12 12M20 14v3" stroke="#333" strokeWidth="3" /><path d="M20 23l9-3c1 6-3 10-8 11z" fill="#d8302c" /><path d="M20 22l6-7" stroke="#2f7fb0" strokeWidth="3" /></Folder>Sensors</Node>
              <Node><Twisty aria-label="Expand Annotations"><I w={11} h={18} vb="0 0 11 18"><path d="M0 0v18l11-9z" fill="#f2f2f2" /></I></Twisty><Folder><path d="M11 34l8-22h3l8 22M14 27h12M8 34h7M25 34h8" fill="none" stroke="#2a6d96" strokeWidth="3" /></Folder>Annotations</Node>
              <Node><Twisty aria-label="No children" /><MatIcon />{"Material <not specified>"}</Node>
              <Node><Twisty aria-label="No children" /><PlaneIcon />Front Plane</Node>
              <Node><Twisty aria-label="No children" /><PlaneIcon />Top Plane</Node>
              <Node><Twisty aria-label="No children" /><PlaneIcon />Right Plane</Node>
              <Node><Twisty aria-label="No children" /><OriginIcon />Origin</Node>
            </Tree>
            <Rollback />
            <HScroll>
              <ScrollEnd aria-label="Scroll left">{chevron("M13 2 4 11l9 9")}</ScrollEnd>
              <ScrollTrack />
              <ScrollEnd aria-label="Scroll right">{chevron("M3 2l9 9-9 9")}</ScrollEnd>
            </HScroll>
          </PanelBody>
          <PanelFoot />
        </Panel>

        <Canvas>
          <Drawing />
          <Hud>
            <Slot aria-label="Zoom to fit"><ZFit /></Slot>
            <Slot aria-label="Zoom to area"><ZArea /></Slot>
            <Slot aria-label="Previous view"><ZPrev /></Slot>
            <Slot aria-label="Section view"><Section /></Slot>
            <Slot aria-label="Dynamic annotation"><Dyn /></Slot>
            <Slot aria-label="View orientation"><Orient /></Slot><HudArr />
            <Slot $w={64} aria-label="Display style"><Disp /></Slot><HudArr w={28} />
            <Slot $w={64} aria-label="Hide or show"><Eye /></Slot><HudArr w={28} />
            <Slot $w={62} aria-label="Edit appearance"><Ball extra={Pencil} w={46} h={48} /></Slot>
            <Slot aria-label="Apply scene"><Ball extra={Checker} w={46} h={48} /></Slot><HudArr />
            <Slot $w={62} aria-label="View settings"><Monitor /></Slot><HudArr />
            <HudOn aria-label="Shaded"><BlueCube /></HudOn>
            <Slot aria-label="Normal to"><NormalTo /></Slot>
          </Hud>
          <PanelHandle aria-label="Collapse panel"><Knob /></PanelHandle>
          <TaskPane>
            <TaskButton aria-label="Home"><HomeIcon /></TaskButton>
            <TaskButton aria-label="Design library"><Books /></TaskButton>
            <TaskButton aria-label="File explorer"><FolderOpen /></TaskButton>
            <TaskButton aria-label="View palette"><Palette /></TaskButton>
            <TaskButton $on aria-label="Appearances"><Ball /></TaskButton>
            <TaskButton aria-label="Custom properties"><ListIcon head /></TaskButton>
            <TaskButton aria-label="Forum"><Chat /></TaskButton>
          </TaskPane>
        </Canvas>

        <BottomTabs>
          {["M6 0v20M18 0v20L8 10z", "M14 0v20L4 10z", "M6 0v20l10-10z", "M16 0v20M4 0v20l10-10z"].map((d, i) => (
            <Step key={d} aria-label={["First", "Previous", "Next", "Last"][i]}><I w={20} h={20} vb="0 0 20 20"><path d={d} fill="#8a8c8f" stroke="#777" strokeWidth="1.5" /></I></Step>
          ))}
          <BottomTab $w={132} $on>Model</BottomTab>
          <BottomTab $w={157}>3D Views</BottomTab>
          <BottomTab $w={248}>Motion Study 1</BottomTab>
        </BottomTabs>
      </Main>

      <Status>
        SOLIDWORKS Premium 2019 SP0.0
        <StatusRight>
          <Bar $r={16} /><Bar $r={9} />Editing Part<Bar $l={13} $r={34} /><Bar />
          <Units>MMGS<Down up /></Units>
          <Bar $h={14} />
        </StatusRight>
      </Status>
      <TaskStrip />
    </Page>
  );
}
